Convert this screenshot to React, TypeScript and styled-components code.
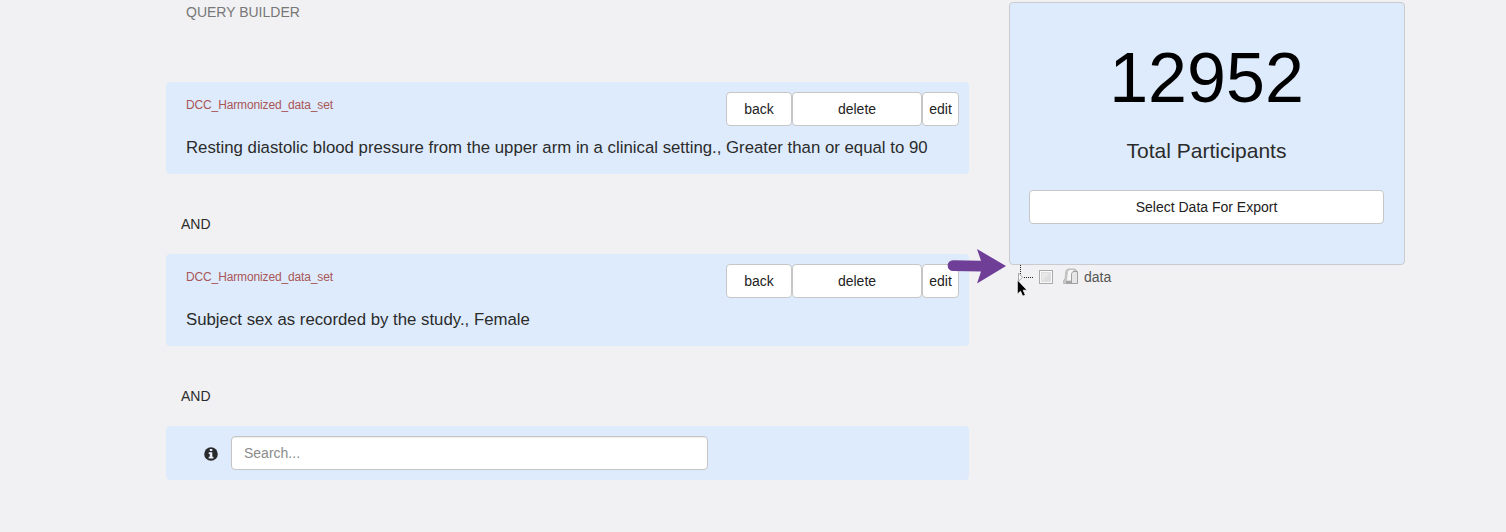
import React from "react";
import styled, { createGlobalStyle } from "styled-components";

const GlobalStyle = createGlobalStyle`
  * { box-sizing: border-box; }
  body {
    margin: 0;
    background: #f1f1f3;
    color: #2b2b2b;
    font: 14px/20px "Liberation Sans", Arial, sans-serif;
    overflow: hidden;
  }
`;

const Page = styled.main`
  position: relative;
  display: grid;
  grid-template-columns: 803px 396px;
  column-gap: 40px;
  align-items: start;
  height: 532px;
  padding: 2px 0 0 166px;
`;

const Builder = styled.section`
  display: flex;
  flex-direction: column;
`;

const Heading = styled.h1`
  margin: 0 0 60px 20px;
  font-size: 14px;
  line-height: 20px;
  font-weight: 400;
  color: #777;
  white-space: nowrap;
`;

const Panel = styled.article`
  height: 92px;
  padding: 10px 10px 0 20px;
  background: #deebfc;
  border-radius: 4px;
`;

const PanelTop = styled.header`
  display: flex;
  justify-content: space-between;
  height: 34px;
`;

const DataSet = styled.div`
  padding-top: 3px;
  font-size: 12px;
  letter-spacing: -0.135px;
  color: #a95656;
`;

const Actions = styled.div`
  display: flex;
`;

const Button = styled.button<{ $width: string }>`
  width: ${(p) => p.$width};
  height: 34px;
  padding: 0;
  border: 1px solid #c6c6c6;
  border-radius: 4px;
  background: #fff;
  color: #222;
  font: inherit;
  white-space: nowrap;
`;

const Criterion = styled.p`
  margin: 10px 0 0;
  font-size: 16.8px;
  line-height: 24px;
  white-space: nowrap;
`;

const Joiner = styled.div`
  height: 80px;
  padding: 40px 0 0 15px;
`;

const SearchPanel = styled.div`
  display: flex;
  align-items: center;
  height: 54px;
  padding-left: 38px;
  background: #deebfc;
  border-radius: 4px;
`;

const SearchInput = styled.input`
  width: 477px;
  height: 34px;
  margin-left: 13px;
  padding: 0 12px;
  border: 1px solid #c4c4c4;
  border-radius: 4px;
  background: #fff;
  box-shadow: inset 0 1px 1px rgba(0, 0, 0, 0.07);
  font: inherit;
  &::placeholder { color: #8b8b8b; opacity: 1; }
`;

const Summary = styled.aside`
  display: flex;
  flex-direction: column;
  height: 263px;
  padding: 35px 20px 0 19px;
  border: 1px solid #c9cbce;
  border-radius: 4px;
  background: #deebfc;
  text-align: center;
`;

const Count = styled.div`
  height: 80px;
  font-size: 70px;
  line-height: 80px;
  color: #000;
`;

const CountLabel = styled.div`
  height: 30px;
  margin: 18px 0 24px;
  font-size: 21px;
  line-height: 30px;
`;

const Tree = styled.div`
  display: flex;
  align-items: flex-start;
  height: 32px;
  padding-left: 8px;
  color: #555;
`;

const TreeLabel = styled.span`
  margin-left: 6px;
  padding-top: 2px;
`;

const Arrow = styled.svg`
  position: absolute;
  left: 945px;
  top: 247px;
`;

const Cursor = styled.svg`
  position: absolute;
  left: 1016px;
  top: 279px;
`;

const Icon = styled.svg`
  display: block;
  flex: none;
`;

function InfoIcon() {
  return (
    <Icon width="14" height="16" viewBox="0 -2 14 16">
      <circle cx="7" cy="7" r="6.8" fill="#292a2c" />
      <path d="M5.8 2.1h2.5v2H5.8zM4.7 5.3h3.6v4.5h1.1v1.6H4.7V9.8h1.1V6.9H4.7z" fill="#e9f1fc" />
    </Icon>
  );
}

function TreeGlyphs() {
  return (
    <Icon width="61" height="24" viewBox="0 0 61 24">
      <path d="M3.5 0v9M7 12.5h9" fill="none" stroke="#222" strokeDasharray="1 1" />
      <path d="M1.5 8.2v8l4-4z" fill="#fff" stroke="#a5a5a5" />
      <rect x="22.5" y="5.5" width="13" height="13" fill="#fafafa" stroke="#aaa" />
      <rect x="24" y="7" width="10" height="10" fill="#dedede" />
      <path d="M25 16V8h8z" fill="#e8e8e8" />
      <path d="M46.5 18.5v-3l1.5-1.5 1-8.5 2-1.5h7l2 2v12.5z" fill="#c6c6c6" stroke="#bdbdbd" />
      <path d="M50 15.5l1-9 1.5-1.5H57l-1.5 2-.5 8.5z" fill="#f6f6f6" />
      <path d="M49 16h5.5v3H49z" fill="#a5a5a5" />
      <path d="M54.5 18.5V8.5l1.5-2h4.5v12z" fill="#e6e6e6" stroke="#a0a0a0" />
    </Icon>
  );
}

function QueryPanel({ text }: { text: string }) {
  return (
    <Panel>
      <PanelTop>
        <DataSet>DCC_Harmonized_data_set</DataSet>
        <Actions>
          <Button $width="66px">back</Button>
          <Button $width="130px">delete</Button>
          <Button $width="37px">edit</Button>
        </Actions>
      </PanelTop>
      <Criterion>{text}</Criterion>
    </Panel>
  );
}

export default function App() {
  return (
    <>
      <GlobalStyle />
      <Page>
        <Builder>
          <Heading>QUERY BUILDER</Heading>
          <QueryPanel text="Resting diastolic blood pressure from the upper arm in a clinical setting., Greater than or equal to 90" />
          <Joiner>AND</Joiner>
          <QueryPanel text="Subject sex as recorded by the study., Female" />
          <Joiner>AND</Joiner>
          <SearchPanel>
            <InfoIcon />
            <SearchInput placeholder="Search..." />
          </SearchPanel>
        </Builder>
        <div>
          <Summary>
            <Count>12952</Count>
            <CountLabel>Total Participants</CountLabel>
            <Button $width="100%">Select Data For Export</Button>
          </Summary>
          <Tree>
            <TreeGlyphs />
            <TreeLabel>data</TreeLabel>
          </Tree>
        </div>
        <Arrow width="62" height="40" viewBox="0 0 62 40">
          <path d="M8 13.2 36 13.8 32 2 61 19 32 36.5 36 24.4 8 24A5.4 5.4 0 0 1 8 13.2z" fill="#6f3f98" />
        </Arrow>
        <Cursor width="12" height="19" viewBox="0 0 12 19">
          <path d="M1.3.8v14.4l3.2-3 2.2 5 2.7-1.2-2.2-4.8h4z" fill="#000" stroke="#fff" strokeWidth=".8" />
        </Cursor>
      </Page>
    </>
  );
}
